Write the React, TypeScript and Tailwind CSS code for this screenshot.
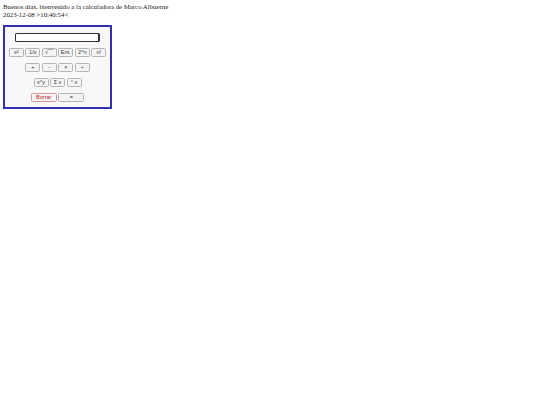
const btn =
  "h-[9px] rounded-[1.5px] border border-[#b4b4b4] bg-[#f4f4f4] flex items-center justify-center pt-[1px] font-['Liberation_Sans',sans-serif] text-[5.5px] leading-none text-[#333]";

function Key({ label, className }: { label: string; className: string }) {
  return <button className={`${btn} ${className}`}>{label}</button>;
}

export default function App() {
  const row1 = ["x²", "1/x", "√‾‾‾", "Ent.", "2^n", "n!"];
  const row2 = ["+", "-", "×", "÷"];
  const row3 = ["x^y", "Σ x", "° x"];

  return (
    <div className="min-h-[405px] bg-white px-[3px] pt-[3px] font-['Liberation_Serif',serif] text-[6.8px] leading-[7.5px] text-[#222]">
      <div>Buenos días, bienvenido a la calculadora de Marco Albuerne</div>
      <div>2023-12-08 &gt;10:40:54&lt;</div>

      <div className="mt-[6.5px] flex h-[84px] w-[109px] flex-col items-center border-2 border-[#3030b0] bg-[#f8f8f8] pt-[6px]">
        <div className="h-[9px] w-[85px] rounded-[1.5px] border border-[#333] border-r-2 bg-white" />
        <div className="mt-[6px] flex gap-[1.5px]">
          {row1.map((k) => (
            <Key key={k} label={k} className="w-[15px]" />
          ))}
        </div>
        <div className="mt-[6px] flex gap-[1.5px]">
          {row2.map((k) => (
            <Key key={k} label={k} className="w-[15px]" />
          ))}
        </div>
        <div className="mt-[6px] flex gap-[1.5px]">
          {row3.map((k) => (
            <Key key={k} label={k} className="w-[15px]" />
          ))}
        </div>
        <div className="mt-[6px] flex gap-[1.5px]">
          <Key label="Borrar" className="w-[26px] !border-[#d49a9a] !text-[#c02020]" />
          <Key label="=" className="w-[26px]" />
        </div>
      </div>
    </div>
  );
}
